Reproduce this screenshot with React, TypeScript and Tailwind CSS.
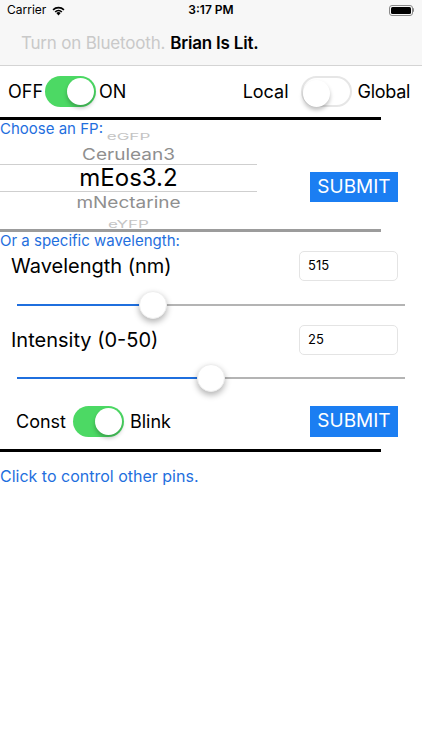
import React from "react";

const font = { fontFamily: "Inter, 'Liberation Sans', Arial, sans-serif" };

function Toggle({ on }: { on: boolean }) {
  return (
    <div
      className={
        "relative w-[51px] h-[31px] rounded-full shrink-0 " +
        (on ? "bg-[#4cd964]" : "bg-white border-2 border-[#e6e6e6]")
      }
    >
      <div
        className={
          "absolute top-[2px] w-[27px] h-[27px] rounded-full bg-white shadow-[0_3px_4px_rgba(0,0,0,0.25)] " +
          (on ? "left-[22px]" : "left-[0px] top-[0px]")
        }
      />
    </div>
  );
}

function Slider({ pct }: { pct: number }) {
  return (
    <div className="relative h-[30px] mx-[17px]">
      <div className="absolute left-0 right-0 top-[14px] h-[2px] bg-[#b4b4b4]" />
      <div className="absolute left-0 top-[14px] h-[2px] bg-[#1f6fde]" style={{ width: `${pct}%` }} />
      <div
        className="absolute top-[1px] w-[28px] h-[28px] rounded-full bg-white shadow-[0_3px_6px_rgba(0,0,0,0.3)] border border-[#eeeeee]"
        style={{ left: `calc(${pct}% - 14px)` }}
      />
    </div>
  );
}

export default function App() {
  return (
    <div className="w-[422px] h-[750px] bg-white overflow-hidden" style={font}>
      {/* status bar */}
      <div className="h-[20px] bg-[#f7f7f7] flex items-center justify-between px-[7px] relative">
        <div className="flex items-center gap-[5px] text-[12px] text-black">
          <span>Carrier</span>
          <svg width="15" height="11" viewBox="0 0 15 11">
            <path d="M7.5 10.5 L5.3 8.1 A3.2 3.2 0 0 1 9.7 8.1 Z" fill="#000" />
            <path d="M3.6 6.4 A5.6 5.6 0 0 1 11.4 6.4 L10.3 7.5 A4 4 0 0 0 4.7 7.5 Z" fill="#000" />
            <path d="M1.5 4.3 A8.6 8.6 0 0 1 13.5 4.3 L12.4 5.4 A7 7 0 0 0 2.6 5.4 Z" fill="#000" />
          </svg>
        </div>
        <span className="absolute left-1/2 -translate-x-1/2 text-[12px] font-semibold text-black">3:17 PM</span>
        <div className="flex items-center mr-[1px]">
          <div className="w-[24px] h-[11px] rounded-[3px] border border-[#8a8a8a] p-[1px]">
            <div className="w-full h-full rounded-[1.5px] bg-black" />
          </div>
          <div className="w-[1.5px] h-[4px] bg-[#8a8a8a] rounded-r-sm" />
        </div>
      </div>
      {/* nav bar */}
      <div className="h-[46px] bg-[#f7f7f7] border-b border-[#d4d4d4] flex items-center pl-[21px] pt-[2px] text-[17px] tracking-[-0.2px]">
        <span className="text-[#c9c9c9]">Turn on Bluetooth.</span>
        <span className="ml-[5px] font-semibold text-black">Brian Is Lit.</span>
      </div>
      {/* toggles row */}
      <div className="h-[51px] flex items-center justify-between px-[8px] text-[18px] text-black">
        <div className="flex items-center">
          <span>OFF</span>
          <div className="ml-[2px] mr-[3px]"><Toggle on /></div>
          <span>ON</span>
        </div>
        <div className="flex items-center mr-[4px]">
          <span>Local</span>
          <div className="ml-[12px] mr-[6px]"><Toggle on={false} /></div>
          <span className="tracking-[-0.3px]">Global</span>
        </div>
      </div>
      <div className="w-[381px] h-[3px] bg-black" />
      {/* FP picker */}
      <div className="relative h-[109px] flex items-start">
        <div className="absolute left-0 top-[-2px] text-[15px] text-[#1f6fde] z-10">Choose an FP:</div>
        <div className="w-[257px] h-full flex flex-col items-center overflow-hidden relative">
          <div className="h-[12px] mt-[11px] text-[17px] leading-[12px] text-[#c4c4c4] scale-y-[0.55] origin-center">eGFP</div>
          <div className="h-[18px] mt-[3px] text-[19px] leading-[18px] text-[#8f8f8f] scale-y-[0.85]">Cerulean3</div>
          <div className="w-full h-[28px] shrink-0 border-y border-[#cfcfcf] flex items-center justify-center text-[24px] text-black">
            mEos3.2
          </div>
          <div className="h-[22px] shrink-0 text-[19px] leading-[22px] text-[#8f8f8f] scale-y-[0.85]">mNectarine</div>
          <div className="h-[14px] shrink-0 mt-[3px] text-[17px] leading-[14px] text-[#c4c4c4] scale-y-[0.6]">eYFP</div>
        </div>
        <div className="ml-[53px] mt-[52px] w-[88px] h-[30px] bg-[#1b7ef2] text-white text-[19px] flex items-center justify-center">
          SUBMIT
        </div>
      </div>
      <div className="w-[381px] h-[3px] bg-[#9c9c9c]" />
      <div className="text-[15px] text-[#1f6fde] leading-[17px]">Or a specific wavelength:</div>
      {/* wavelength */}
      <div className="flex items-center justify-between pl-[11px] pr-[24px] mt-[2px] h-[30px]">
        <span className="text-[20px] text-black">Wavelength (nm)</span>
        <div className="w-[99px] h-[30px] rounded-[5px] border border-[#e4e4e4] flex items-center px-[8px] text-[13px] text-black">515</div>
      </div>
      <div className="mt-[9px]"><Slider pct={35} /></div>
      <div className="flex items-center justify-between pl-[11px] pr-[24px] mt-[5px] h-[30px]">
        <span className="text-[20px] text-black">Intensity (0-50)</span>
        <div className="w-[99px] h-[30px] rounded-[5px] border border-[#e4e4e4] flex items-center px-[8px] text-[13px] text-black">25</div>
      </div>
      <div className="mt-[8px]"><Slider pct={50} /></div>
      {/* const row */}
      <div className="flex items-center justify-between pl-[16px] pr-[24px] mt-[13px] h-[31px]">
        <div className="flex items-center text-[18px] text-black">
          <span>Const</span>
          <div className="ml-[7px] mr-[6px]"><Toggle on /></div>
          <span>Blink</span>
        </div>
        <div className="w-[88px] h-[31px] bg-[#1b7ef2] text-white text-[19px] flex items-center justify-center">SUBMIT</div>
      </div>
      <div className="mt-[12px] w-[381px] h-[3px] bg-black" />
      <div className="mt-[12px] text-[16px] text-[#1f6fde]">Click to control other pins.</div>
    </div>
  );
}
